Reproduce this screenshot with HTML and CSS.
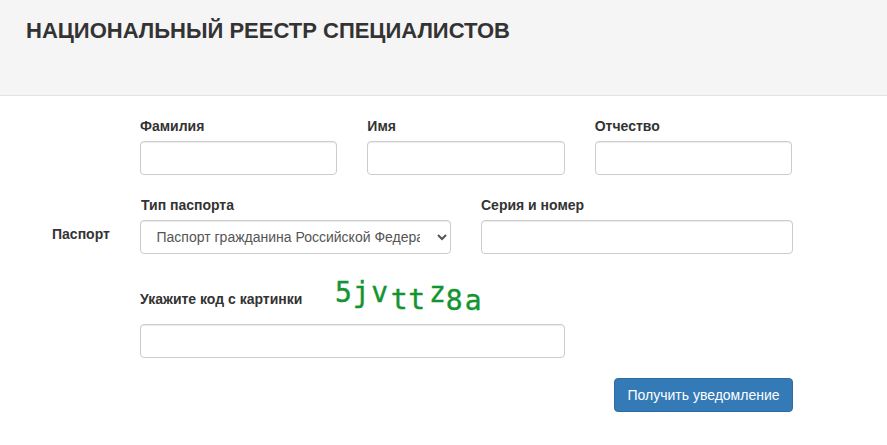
FILE: index.html
```html
<!DOCTYPE html>
<html lang="ru">
<head>
<meta charset="utf-8">
<title>Национальный реестр специалистов</title>
<link rel="stylesheet" href="styles.css">
</head>
<body>
<header class="banner">
  <h1 class="title">НАЦИОНАЛЬНЫЙ РЕЕСТР СПЕЦИАЛИСТОВ</h1>
</header>
<form class="form">
  <div class="row-names">
    <div class="field"><label class="label" for="f1">Фамилия</label><input class="control" id="f1" type="text"></div>
    <div class="field"><label class="label" for="f2">Имя</label><input class="control" id="f2" type="text"></div>
    <div class="field"><label class="label" for="f3">Отчество</label><input class="control" id="f3" type="text"></div>
  </div>
  <div class="row-passport">
    <div class="passport-title">Паспорт</div>
    <div class="passport-fields">
      <div class="field"><label class="label label-type" for="f4">Тип паспорта</label>
        <select class="control select" id="f4"><option>Паспорт гражданина Российской Федерации</option></select>
      </div>
      <div class="field"><label class="label" for="f5">Серия и номер</label><input class="control" id="f5" type="text"></div>
    </div>
  </div>
  <div class="captcha-head">
    <label class="label captcha-label" for="f6">Укажите код с картинки</label>
    <div class="captcha"><span class="c1">5</span><span class="c2">j</span><span class="c3">v</span><span class="c4">t</span><span class="c5">t</span><span class="c6">z</span><span class="c7">8</span><span class="c8">a</span></div>
  </div>
  <input class="control captcha-input" id="f6" type="text">
  <div class="actions"><button class="btn" type="button">Получить уведомление</button></div>
</form>
</body>
</html>
```
FILE: styles.css
```css
* { box-sizing: border-box; }
html, body { margin: 0; padding: 0; }
body {
  background: #fff;
  color: #333;
  font-family: "Liberation Sans", Arial, sans-serif;
  font-size: 14px;
  line-height: 20px;
}
.banner {
  height: 96px;
  background: #f5f5f5;
  border-bottom: 1px solid #e3e3e3;
  padding: 18px 26px 0;
}
.title {
  margin: 0;
  font-size: 22px;
  line-height: 26px;
  font-weight: 700;
  color: #333;
}
.form {
  padding: 20px 0 0 140px;
  width: 793px;
}
.field { display: flex; flex-direction: column; min-width: 0; }
.label {
  display: block;
  font-weight: 700;
  font-size: 14px;
  line-height: 20px;
  margin-bottom: 5px;
}
.control {
  display: block;
  width: 100%;
  height: 34px;
  padding: 6px 12px;
  font-family: inherit;
  font-size: 14px;
  color: #555;
  background: #fff;
  border: 1px solid #ccc;
  border-radius: 4px;
  box-shadow: inset 0 1px 1px rgba(0,0,0,.075);
}
.select { padding-left: 11.5px; padding-right: 14px; }
.row-names {
  display: grid;
  grid-template-columns: repeat(3, 1fr);
  column-gap: 30px;
  width: 652px;
}
.row-passport { margin: 20px 0 0 -140px; display: flex; }
.passport-title {
  width: 140px;
  padding: 29px 0 0 52px;
  font-weight: 700;
  line-height: 20px;
}
.passport-fields {
  flex: 1;
  display: grid;
  grid-template-columns: 311px 312px;
  column-gap: 30px;
}
.label-type { padding-left: 1px; }
.captcha-head {
  display: flex;
  align-items: center;
  height: 50px;
  margin-top: 20px;
}
.captcha-label { margin: 0; width: 195px; }
.captcha {
  display: flex;
  align-items: flex-start;
  height: 50px;
  font-family: "DejaVu Sans Mono", monospace;
  font-size: 28px;
  line-height: 36px;
  color: #149430;
  -webkit-text-stroke: 0.4px #149430;
}
.captcha span { display: block; }
.c1 { margin-top: 1px; }
.c2 { margin-top: 1px; margin-left: 1px; }
.c3 { margin-top: 1px; margin-left: 1.5px; }
.c4 { margin-top: 8px; margin-left: 2.7px; }
.c5 { margin-top: 8px; margin-left: 0.5px; }
.c6 { margin-top: 1px; margin-left: 4px; }
.c7 { margin-top: 9px; }
.c8 { margin-top: 9px; margin-left: 2px; }
.captcha-input { width: 425px; }
.actions { display: flex; justify-content: flex-end; margin-top: 20px; }
.btn {
  width: 179px;
  height: 34px;
  padding: 6px 12px;
  font-family: inherit;
  font-size: 14px;
  line-height: 20px;
  color: #fff;
  background: #337ab7;
  border: 1px solid #2e6da4;
  border-radius: 4px;
}
```
